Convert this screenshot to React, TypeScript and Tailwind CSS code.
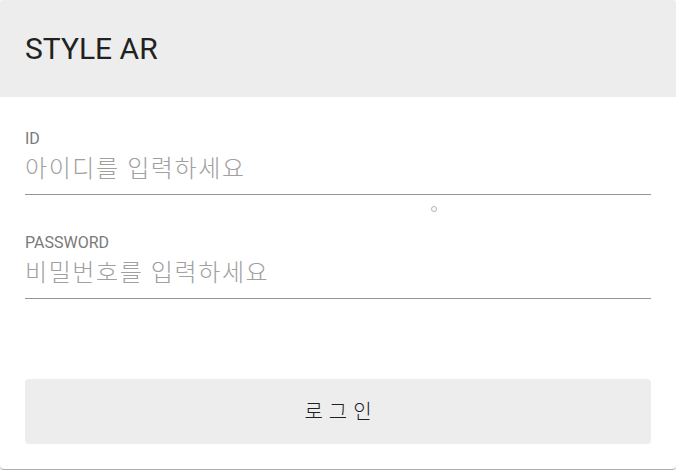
export default function App() {
  return (
    <div className="w-[676px] h-[470px] bg-white" style={{fontFamily: 'Roboto, "Noto Sans CJK KR", sans-serif'}}>
      <div className="w-[676px] h-[469px] rounded bg-white overflow-hidden shadow-[0_1px_3px_0_rgba(0,0,0,0.2),0_1px_1px_0_rgba(0,0,0,0.14),0_2px_1px_-1px_rgba(0,0,0,0.12)] flex flex-col">
        <div className="h-[97px] shrink-0 bg-[#ededed] flex items-center px-[25px]">
          <h1 className="text-[30px] text-[#212121] font-normal leading-none">STYLE AR</h1>
        </div>
        <div className="flex-1 px-[25px] pt-[32px] flex flex-col">
          <div className="flex flex-col">
            <label className="text-[16px] leading-[20px] text-[#7a7a7a]">ID</label>
            <input
              className="h-[46px] pb-[6px] text-[24px] tracking-[1.6px] font-light text-[#212121] placeholder:text-[#a0a0a0] border-b border-[#949494] outline-none"
              placeholder="아이디를 입력하세요"
            />
          </div>
          <div className="relative h-[38px] shrink-0">
            <span className="absolute left-[406px] top-[11px] w-[6px] h-[6px] rounded-full border border-[#b3b0c8]" />
          </div>
          <div className="flex flex-col">
            <label className="text-[16px] leading-[20px] text-[#7a7a7a]">PASSWORD</label>
            <input
              type="password"
              className="h-[46px] pb-[6px] text-[24px] tracking-[1.6px] font-light text-[#212121] placeholder:text-[#a0a0a0] border-b border-[#949494] outline-none"
              placeholder="비밀번호를 입력하세요"
            />
          </div>
          <button className="mt-[80px] h-[65px] shrink-0 rounded bg-[#ededed] text-[20px] font-light text-[#212121] tracking-[6px] pl-[6px]">
            로그인
          </button>
        </div>
      </div>
    </div>
  );
}
